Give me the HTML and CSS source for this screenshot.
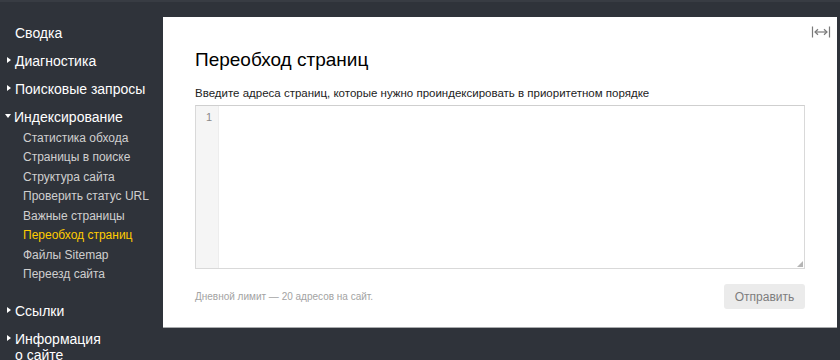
FILE: index.html
```html
<!DOCTYPE html>
<html lang="ru">
<head>
    <meta charset="UTF-8">
    <title>Переобход страниц</title>
    <link rel="stylesheet" href="styles.css">
</head>
<body>
    <div class="layout">
        <nav class="sidebar">
            <a class="nav-item">Сводка</a>
            <a class="nav-item closed">Диагностика</a>
            <a class="nav-item closed">Поисковые запросы</a>
            <a class="nav-item open">Индексирование</a>
            <div class="sub-list">
                <a class="sub-item">Статистика обхода</a>
                <a class="sub-item">Страницы в поиске</a>
                <a class="sub-item">Структура сайта</a>
                <a class="sub-item">Проверить статус URL</a>
                <a class="sub-item">Важные страницы</a>
                <a class="sub-item active">Переобход страниц</a>
                <a class="sub-item">Файлы Sitemap</a>
                <a class="sub-item">Переезд сайта</a>
            </div>
            <a class="nav-item closed">Ссылки</a>
            <a class="nav-item closed">Информация<br>о сайте</a>
        </nav>

        <main class="main">
            <div class="panel">
                <span class="expand" title="Развернуть">
                    <svg width="20" height="12" viewBox="0 0 20 12">
                        <path d="M1.5 0.5v11M18.5 0.5v11" stroke="#7a7a7a" stroke-width="1.2" fill="none"/>
                        <path d="M4 6h12" stroke="#7a7a7a" stroke-width="1.2" fill="none"/>
                        <path d="M7 3.2L4 6l3 2.8M13 3.2L16 6l-3 2.8" stroke="#7a7a7a" stroke-width="1.2" fill="none"/>
                    </svg>
                </span>

                <h1 class="title">Переобход страниц</h1>
                <div class="label">Введите адреса страниц, которые нужно проиндексировать в приоритетном порядке</div>

                <div class="editor">
                    <div class="gutter">1</div>
                    <div class="code"></div>
                    <span class="resize"></span>
                </div>

                <div class="footer">
                    <span class="limit">Дневной лимит — 20 адресов на сайт.</span>
                    <button class="submit" disabled>Отправить</button>
                </div>
            </div>
        </main>
    </div>
</body>
</html>
```

FILE: styles.css
```css
body {
    margin: 0;
    background-color: #2f333a;
    border-top: 2px solid #383c43;
    font-family: "Liberation Sans", Arial, sans-serif;
    height: 358px;
    overflow: hidden;
}
.layout {
    display: flex;
}
.sidebar {
    width: 163px;
    flex-shrink: 0;
    padding-top: 17px;
    display: flex;
    flex-direction: column;
}
.nav-item {
    display: block;
    padding: 6px 0 6px 15px;
    line-height: 16px;
    font-size: 14px;
    color: #fff;
}
.nav-item.closed::before,
.nav-item.open::before {
    content: "";
    display: inline-block;
    width: 0;
    height: 0;
    vertical-align: 3px;
}
.nav-item.closed::before {
    border-left: 4px solid #fff;
    border-top: 3.5px solid transparent;
    border-bottom: 3.5px solid transparent;
    margin-left: -8px;
    margin-right: 4px;
}
.nav-item.open::before {
    border-top: 4px solid #fff;
    border-left: 3.5px solid transparent;
    border-right: 3.5px solid transparent;
    margin-left: -10px;
    margin-right: 3px;
    vertical-align: 4px;
}
.sub-list {
    margin-top: -2.5px;
    margin-bottom: 12.5px;
}
.sub-item {
    display: block;
    padding-left: 23px;
    font-size: 12px;
    line-height: 19.5px;
    color: #cfcfcf;
}
.sub-item.active {
    color: #ffcc00;
}
.main {
    flex: 1;
    padding: 15px 3px 0 0;
}
.panel {
    position: relative;
    background-color: #fff;
    height: 311px;
    border-bottom: 1px solid #a9abad;
    padding: 0 32px 0 32px;
    box-sizing: border-box;
}
.expand {
    position: absolute;
    right: 6px;
    top: 9px;
    line-height: 0;
}
.title {
    margin: 0;
    padding-top: 30px;
    font-size: 19px;
    font-weight: normal;
    line-height: 26px;
    color: #000;
}
.label {
    margin-top: 12px;
    font-size: 11.5px;
    line-height: 16px;
    color: #222;
}
.editor {
    position: relative;
    display: flex;
    height: 164px;
    margin-top: 4px;
    border: 1px solid #d9d9d9;
    border-top-color: #cfcfcf;
    box-sizing: border-box;
}
.gutter {
    width: 23px;
    flex-shrink: 0;
    background-color: #f5f5f5;
    border-right: 1px solid #ededed;
    box-sizing: border-box;
    text-align: right;
    padding: 4px 6px 0 0;
    font-size: 11px;
    line-height: 14px;
    color: #8a8a8a;
}
.code {
    flex: 1;
}
.resize {
    position: absolute;
    right: 1px;
    bottom: 1px;
    width: 6px;
    height: 6px;
    background-image: radial-gradient(circle, #b5b5b5 0.8px, transparent 1px);
    background-size: 2px 2px;
    clip-path: polygon(100% 0, 100% 100%, 0 100%);
}
.footer {
    display: flex;
    align-items: center;
    justify-content: space-between;
    margin-top: 15px;
}
.limit {
    font-size: 10px;
    color: #a3a3a3;
}
.submit {
    width: 81px;
    height: 25px;
    border: none;
    border-radius: 3px;
    background-color: #ebebeb;
    font-family: "Liberation Sans", Arial, sans-serif;
    font-size: 12px;
    color: #7d7d7d;
    padding: 0;
}
```
